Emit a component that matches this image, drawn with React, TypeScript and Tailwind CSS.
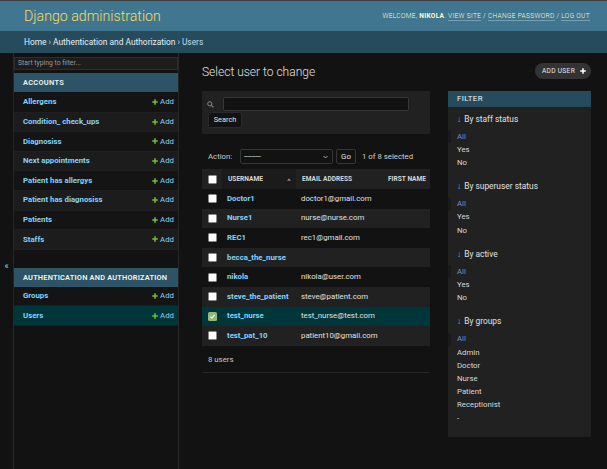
import React from "react";

const models = [
  "Allergens",
  "Condition_ check_ups",
  "Diagnosiss",
  "Next appointments",
  "Patient has allergys",
  "Patient has diagnosiss",
  "Patients",
  "Staffs",
];

const users = [
  ["Doctor1", "doctor1@gmail.com"],
  ["Nurse1", "nurse@nurse.com"],
  ["REC1", "rec1@gmail.com"],
  ["becca_the_nurse", ""],
  ["nikola", "nikola@user.com"],
  ["steve_the_patient", "steve@patient.com"],
  ["test_nurse", "test_nurse@test.com"],
  ["test_pat_10", "patient10@gmail.com"],
];

const filters: [string, string[]][] = [
  ["By staff status", ["All", "Yes", "No"]],
  ["By superuser status", ["All", "Yes", "No"]],
  ["By active", ["All", "Yes", "No"]],
  ["By groups", ["All", "Admin", "Doctor", "Nurse", "Patient", "Receptionist", "-"]],
];

function Plus({ color }: { color: string }) {
  return (
    <svg width="6" height="6" viewBox="0 0 14 14" className="shrink-0">
      <path d="M5.2 0.5h3.6v4.7h4.7v3.6H8.8v4.7H5.2V8.8H0.5V5.2h4.7z" fill={color} />
    </svg>
  );
}

function Check({ checked }: { checked?: boolean }) {
  if (checked) {
    return (
      <div className="w-[9px] h-[9px] rounded-[1.5px] bg-[#93b878] flex items-center justify-center">
        <svg width="7" height="7" viewBox="0 0 10 10">
          <path d="M2 5.2l2 2 4-4.6" stroke="#ffffff" strokeWidth="1.6" fill="none" />
        </svg>
      </div>
    );
  }
  return <div className="w-[9px] h-[9px] rounded-[1.5px] bg-white border border-[#8a8a8a]" />;
}

export default function App() {
  return (
    <div className="w-[607px] h-[469px] overflow-hidden bg-[#121212] border-t border-[#3e3e3e] flex flex-col font-['Roboto',sans-serif] text-[#eeeeee]">
      <header className="h-[30px] shrink-0 bg-[#417690] flex items-center justify-between pl-[24px] pr-[17px]">
        <div className="text-[14.2px] font-light text-[#f5dd5d] leading-none">Django administration</div>
        <div className="text-[6.6px] uppercase tracking-[0.3px] font-light text-[#ffffcc] leading-none">
          Welcome, <strong className="font-bold">Nikola</strong>.{" "}
          <span className="border-b border-white/30">View site</span> /{" "}
          <span className="border-b border-white/30">Change password</span> /{" "}
          <span className="border-b border-white/30">Log out</span>
        </div>
      </header>
      <div className="h-[22px] shrink-0 bg-[#264b5d] px-[24px] flex items-center text-[8.4px] text-[#c4dce8] leading-none">
        <span className="text-[#e6eef2]">Home</span>
        <span className="mx-[2px]">›</span>
        <span className="text-[#e6eef2]">Authentication and Authorization</span>
        <span className="mx-[2px]">›</span>
        <span>Users</span>
      </div>

      <div className="flex flex-1 min-h-0">
        <div className="w-[14px] shrink-0 border-r border-[#272727] flex justify-center pt-[209px]">
          <span className="text-[#81d4fa] text-[9px] leading-none">«</span>
        </div>

        <nav className="w-[165px] shrink-0 border-r border-[#272727] flex flex-col">
          <div className="mt-[4px] h-[13px] bg-[#1d1d1d] border border-[#2e2e2e] flex items-center pl-[3px] text-[6.8px] text-[#9a9a9a] leading-none">
            Start typing to filter...
          </div>
          <div className="mt-[3px] h-[19px] bg-[#2c5466] flex items-center px-[9px] text-[7.4px] font-semibold uppercase tracking-[0.3px] text-[#f4f4ec] leading-none">
            Accounts
          </div>
          <div className="pt-[1px]">
            {models.map((m, i) => (
              <div
                key={m}
                className={`h-[19.6px] flex items-center justify-between pl-[9px] pr-[4px] border-b border-[#1f1f1f] ${
                  i % 2 === 1 ? "bg-[#1c1c1c]" : "bg-[#141414]"
                }`}
              >
                <span className="text-[7.8px] font-bold text-[#81d4fa] leading-none">{m}</span>
                <span className="flex items-center gap-[2px] text-[7.8px] text-[#81d4fa] leading-none">
                  <Plus color="#70bf2b" />
                  Add
                </span>
              </div>
            ))}
          </div>
          <div className="mt-[18px] h-[19px] bg-[#2c5466] flex items-center px-[9px] text-[7.4px] font-semibold uppercase tracking-[0.2px] whitespace-nowrap text-[#f4f4ec] leading-none">
            Authentication and Authorization
          </div>
          {["Groups", "Users"].map((m) => (
            <div
              key={m}
              className={`h-[19.6px] flex items-center justify-between pl-[9px] pr-[4px] border-b border-[#1f1f1f] ${
                m === "Users" ? "bg-[#00363a]" : "bg-[#141414]"
              }`}
            >
              <span className="text-[7.8px] font-bold text-[#81d4fa] leading-none">{m}</span>
              <span className="flex items-center gap-[2px] text-[7.8px] text-[#81d4fa] leading-none">
                <Plus color="#70bf2b" />
                Add
              </span>
            </div>
          ))}
        </nav>

        <main className="flex-1 min-w-0 pl-[23px] pr-[16px] pt-[10px]">
          <div className="flex items-center justify-between h-[16px]">
            <h1 className="text-[12px] font-light text-[#e0e0e0] leading-none mt-[2px]">Select user to change</h1>
            <div className="h-[16px] rounded-full bg-[#333333] flex items-center pl-[7px] pr-[5px] gap-[5px] text-[6.6px] uppercase tracking-[0.3px] text-[#e8e8e8] leading-none">
              Add user
              <Plus color="#ffffff" />
            </div>
          </div>

          <div className="mt-[12px] flex gap-[18px] items-start">
            <div className="w-[228px] shrink-0">
              <div className="bg-[#212121] pt-[6px] pb-[6px] pl-[6px]">
                <div className="flex items-center h-[14px]">
                  <svg width="7" height="7" viewBox="0 0 10 10" className="ml-[-1px]">
                    <circle cx="4" cy="4" r="3" stroke="#8a8a8a" strokeWidth="1.4" fill="none" />
                    <path d="M6.2 6.2L9.2 9.2" stroke="#8a8a8a" strokeWidth="1.6" />
                  </svg>
                  <div className="ml-[9px] w-[186px] h-[14px] bg-[#121212] border border-[#353535] rounded-[2px]" />
                </div>
                <div className="mt-[1px] w-[34px] h-[16px] bg-[#121212] border border-[#2a2a2a] rounded-[2px] flex items-center justify-center text-[7.4px] text-[#e0e0e0] leading-none">
                  Search
                </div>
              </div>

              <div className="mt-[15px] h-[15px] flex items-center pl-[6px] text-[7.8px] text-[#c8c8c8] leading-none">
                <span className="w-[32px]">Action:</span>
                <div className="w-[93px] h-[15px] bg-[#121212] border border-[#353535] rounded-[2px] flex items-center justify-between pl-[3px] pr-[4px]">
                  <span className="text-[#e0e0e0] tracking-[-0.3px]">---------</span>
                  <svg width="5" height="4" viewBox="0 0 10 6">
                    <path d="M1 1l4 4 4-4" stroke="#d0d0d0" strokeWidth="1.6" fill="none" />
                  </svg>
                </div>
                <div className="ml-[3px] w-[20px] h-[15px] bg-[#121212] border border-[#353535] rounded-[2px] flex items-center justify-center text-[#e0e0e0]">
                  Go
                </div>
                <span className="ml-[6px] text-[#d0d0d0]">1 of 8 selected</span>
              </div>

              <div className="mt-[5px] w-[228px] overflow-hidden">
                <div className="w-max">
                  <div className="grid grid-cols-[20px_74px_86px_80px] h-[20px] bg-[#212121] text-[6.6px] font-bold uppercase text-[#d8d8d8] leading-none">
                    <div className="flex items-center pl-[6px]">
                      <Check />
                    </div>
                    <div className="flex items-center justify-between bg-[#1b1b1b] pl-[6px] pr-[5px]">
                      <span>Username</span>
                      <svg width="4" height="3" viewBox="0 0 8 5">
                        <path d="M0 5L4 0l4 5z" fill="#8a8a8a" />
                      </svg>
                    </div>
                    <div className="flex items-center pl-[6px]">Email address</div>
                    <div className="flex items-center pl-[6px]">First name</div>
                  </div>
                  {users.map(([u, e], i) => {
                    const sel = u === "test_nurse";
                    const bg = sel ? "bg-[#00363a]" : i % 2 === 1 ? "bg-[#212121]" : "bg-[#121212]";
                    return (
                      <div
                        key={u}
                        className={`grid grid-cols-[20px_74px_86px_80px] h-[19.6px] ${bg} text-[7.8px] leading-none`}
                      >
                        <div className="flex items-center pl-[6px]">
                          <Check checked={sel} />
                        </div>
                        <div className="flex items-center pl-[5px] font-bold text-[#81d4fa]">{u}</div>
                        <div className="flex items-center pl-[5px] text-[#e0e0e0]">{e}</div>
                        <div />
                      </div>
                    );
                  })}
                </div>
              </div>
              <div className="pt-[9px] pb-[7px] pl-[6px] border-b border-[#272727] text-[7.8px] text-[#c8c8c8] leading-[10px]">
                8 users
              </div>
            </div>

            <aside className="w-[143px] shrink-0 bg-[#212121] pb-[12px]">
              <div className="h-[16px] bg-[#264b5d] flex items-center px-[9px] text-[7.8px] uppercase tracking-[0.4px] text-[#f7f7f7] leading-none">
                Filter
              </div>
              <div className="pt-[6px]">
                {filters.map(([title, items], fi) => (
                  <div key={title} className={fi > 0 ? "mt-[11px]" : ""}>
                    <div className="h-[12px] flex items-center px-[9px] text-[8.4px] text-[#e0e0e0] leading-none">
                      <span className="font-bold text-[#4ac1f7] mr-[3px]">↓</span>
                      {title}
                    </div>
                    <div className="mt-[5px]">
                      {items.map((it, ii) => (
                        <div
                          key={it + ii}
                          className={`h-[13.2px] flex items-center text-[7.8px] leading-none ${
                            ii === 0
                              ? "border-l-[3px] border-[#1a1a1a] pl-[6px] text-[#6f94c6]"
                              : "pl-[9px] text-[#d8d8d8]"
                          }`}
                        >
                          {it}
                        </div>
                      ))}
                    </div>
                  </div>
                ))}
              </div>
            </aside>
          </div>
        </main>
      </div>
    </div>
  );
}
